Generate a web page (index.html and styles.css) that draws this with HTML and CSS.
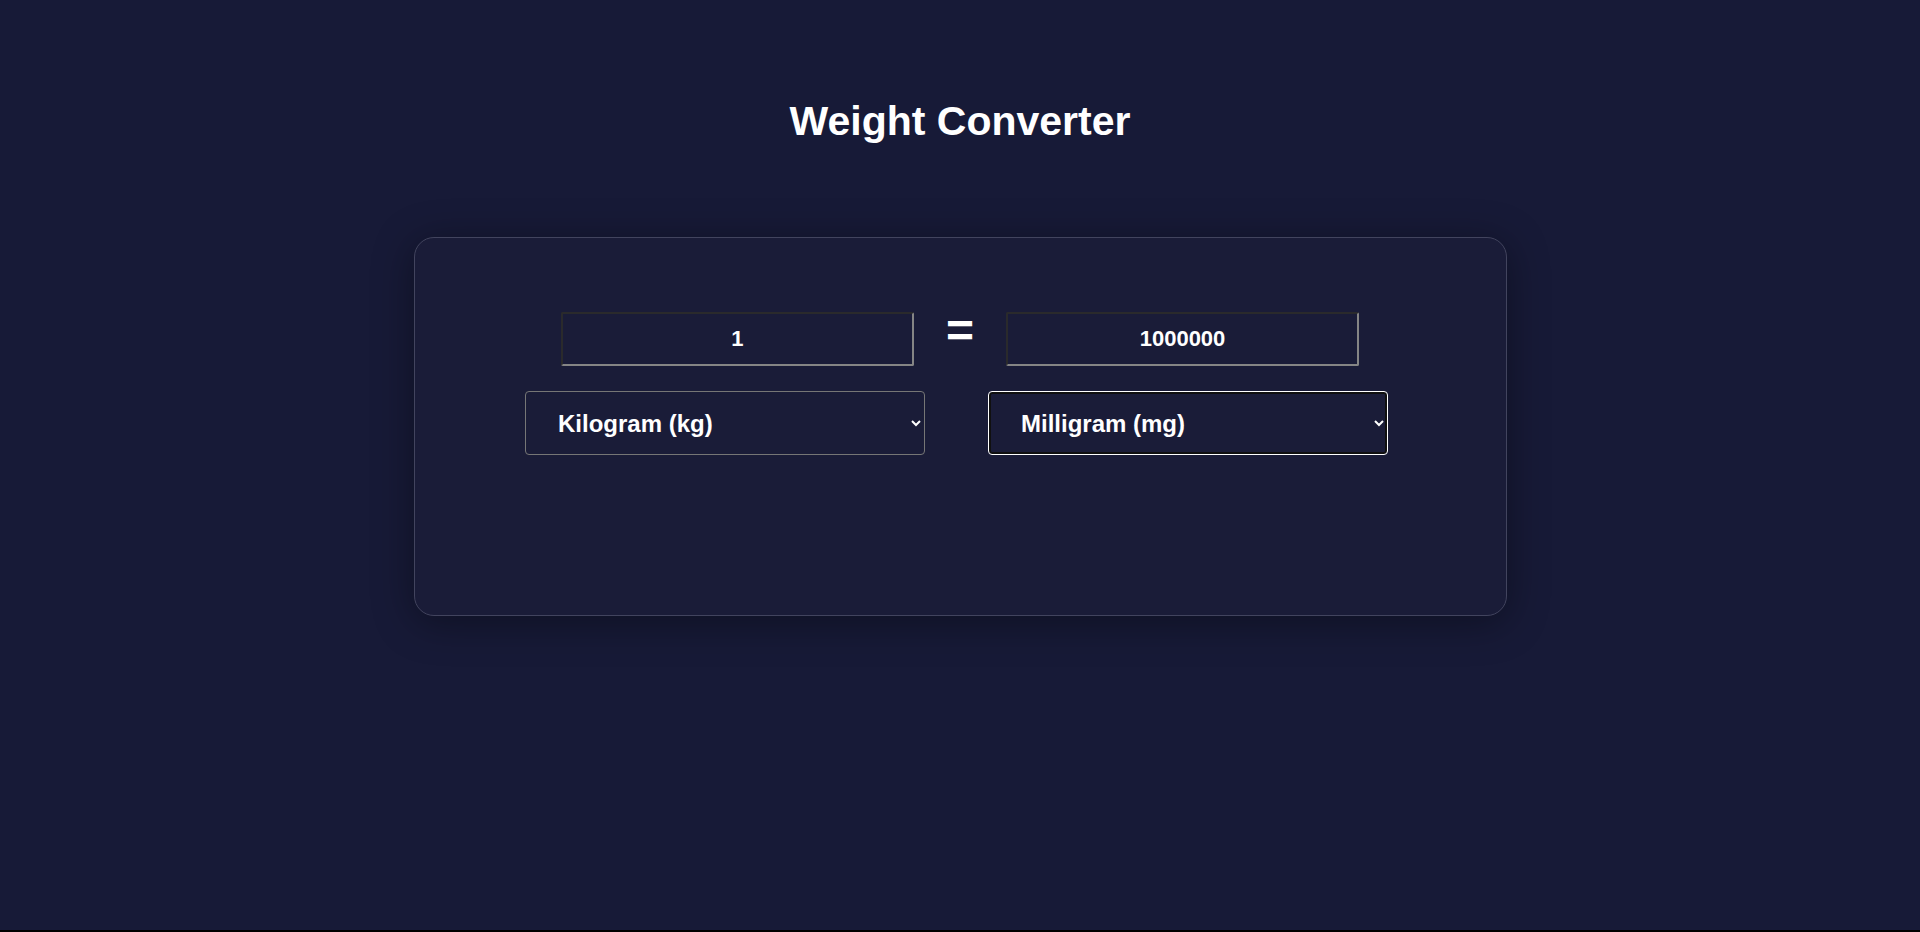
FILE: index.html
```html
<!DOCTYPE html>
<html lang="en">
<head>
<meta charset="utf-8">
<title>Weight Converter</title>
<link rel="stylesheet" href="styles.css">
</head>
<body>
  <main class="page">
    <h1 class="title">Weight Converter</h1>
    <section class="card">
      <div class="value-row">
        <input class="value-input" type="text" value="1">
        <span class="equals">=</span>
        <input class="value-input" type="text" value="1000000">
      </div>
      <div class="unit-row">
        <select class="unit-select">
          <option>Kilogram (kg)</option>
          <option>Gram (g)</option>
          <option>Milligram (mg)</option>
          <option>Pound (lb)</option>
          <option>Ounce (oz)</option>
        </select>
        <select class="unit-select unit-select--active">
          <option>Kilogram (kg)</option>
          <option>Gram (g)</option>
          <option selected>Milligram (mg)</option>
          <option>Pound (lb)</option>
          <option>Ounce (oz)</option>
        </select>
      </div>
    </section>
  </main>
</body>
</html>
```

FILE: styles.css
```css
html {
  background: #000;
}

body {
  margin: 0;
  height: calc(100vh - 2px);
  background: #171a37;
  color: #fff;
  font-family: "Liberation Sans", Arial, sans-serif;
}

.page {
  padding-top: 98px;
}

.title {
  margin: 0;
  font-size: 41px;
  line-height: 46px;
  font-weight: 700;
  text-align: center;
}

.card {
  box-sizing: border-box;
  width: 1093px;
  margin: 93px auto 0;
  padding: 74px 0 160px;
  background: #1a1c38;
  border: 1px solid #42445e;
  border-radius: 20px;
  box-shadow: 0 6px 40px rgba(0, 0, 0, 0.38);
}

.value-row {
  display: flex;
  justify-content: center;
  align-items: flex-start;
  gap: 32px;
}

.value-input {
  box-sizing: border-box;
  width: 353px;
  height: 54px;
  padding: 0 8px;
  margin: 0;
  background: transparent;
  color: #fff;
  font-family: "Liberation Sans", Arial, sans-serif;
  font-size: 22px;
  font-weight: 700;
  text-align: center;
  border-style: solid;
  border-width: 2px;
  border-color: #2a2a2c #858585 #858585 #2a2a2c;
  border-radius: 2px;
  outline: none;
}

.equals {
  font-size: 48px;
  font-weight: 700;
  line-height: 37px;
}

.unit-row {
  display: flex;
  justify-content: center;
  gap: 63px;
  margin-top: 25px;
  padding-right: 7px;
}

.unit-select {
  box-sizing: border-box;
  width: 400px;
  height: 64px;
  margin: 0;
  padding: 0 32px 0 28px;
  background: transparent;
  color: #fff;
  font-family: "Liberation Sans", Arial, sans-serif;
  font-size: 24px;
  font-weight: 700;
  border: 1px solid #767676;
  border-radius: 4px;
  outline: none;
}

.unit-select option {
  background: #1a1c38;
  color: #fff;
}

.unit-select--active {
  border-color: #fff;
  box-shadow: inset 0 0 0 2px #101010;
}
```
